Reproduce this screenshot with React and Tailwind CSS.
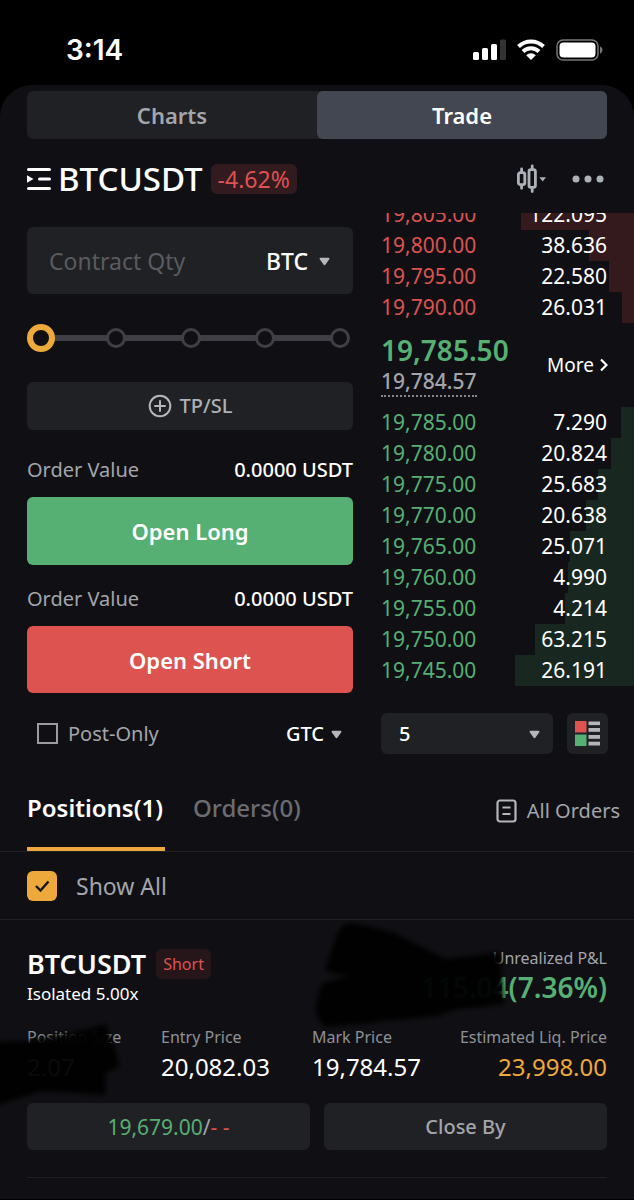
import { useState } from 'react';

const asks = [
  { price: '19,805.00', qty: '122.095', depth: 45 },
  { price: '19,800.00', qty: '38.636', depth: 18 },
  { price: '19,795.00', qty: '22.580', depth: 10 },
  { price: '19,790.00', qty: '26.031', depth: 5 },
];

const bids = [
  { price: '19,785.00', qty: '7.290', depth: 5 },
  { price: '19,780.00', qty: '20.824', depth: 9 },
  { price: '19,775.00', qty: '25.683', depth: 14 },
  { price: '19,770.00', qty: '20.638', depth: 19 },
  { price: '19,765.00', qty: '25.071', depth: 25 },
  { price: '19,760.00', qty: '4.990', depth: 26 },
  { price: '19,755.00', qty: '4.214', depth: 27 },
  { price: '19,750.00', qty: '63.215', depth: 39 },
  { price: '19,745.00', qty: '26.191', depth: 47 },
];

const steps = [0, 25, 50, 75, 100];

function Caret({ className }) {
  return (
    <svg className={className} width="11" height="9" viewBox="0 0 12 9" fill="#B4B6BC" aria-hidden="true">
      <path d="M1.6 0.5h8.8c.9 0 1.3.9.8 1.6L7.1 7.9c-.5.8-1.7.8-2.2 0L.8 2.1C.3 1.4.7.5 1.6.5z" />
    </svg>
  );
}

function StatusBar() {
  return (
    <div className="flex h-[85px] items-center justify-between pt-[15px] pr-[31px] pl-[66px]">
      <span className="font-['Inter',sans-serif] text-[28px] leading-8 font-semibold">3:14</span>
      <div className="flex items-center gap-[11px]">
        <svg width="33" height="22" viewBox="0 0 33 22" fill="white">
          <rect x="0" y="13" width="6" height="8" rx="1.5" />
          <rect x="9" y="9" width="6" height="12" rx="1.5" />
          <rect x="18" y="5" width="6" height="16" rx="1.5" />
          <rect x="27" y="0.5" width="6" height="20.5" rx="1.5" fill="#333" />
        </svg>
        <svg width="28" height="22" viewBox="0 0 28 22" fill="none" stroke="white" strokeWidth="4">
          <path d="M1.5 7.5a18 18 0 0 1 25 0" />
          <path d="M6 12.5a11.5 11.5 0 0 1 16 0" />
          <path d="M9.2 16.2a7 7 0 0 1 9.6 0L14 21z" fill="white" stroke="none" />
        </svg>
        <svg width="47" height="22" viewBox="0 0 47 22" fill="none">
          <rect x="1" y="1" width="41" height="20" rx="6" stroke="#777" strokeWidth="1.5" />
          <rect x="3.5" y="3.5" width="36" height="15" rx="4" fill="white" />
          <path d="M44 7.5c1.6.6 2.5 2 2.5 3.5s-.9 2.9-2.5 3.5z" fill="#777" />
        </svg>
      </div>
    </div>
  );
}

function PairHeader() {
  return (
    <header className="flex h-[74px] items-center justify-between pt-[6px] pr-[30px] pl-[27px]">
      <div className="flex items-center">
        <button aria-label="Pairs" className="mr-[7px]">
          <svg width="24" height="24" viewBox="0 0 24 24" fill="none" stroke="white" strokeWidth="3" strokeLinecap="round">
            <path d="M1.5 2.5h21M12.5 12h10M1.5 21.5h21" />
            <path d="M0 8.2v7.6L6.5 12z" fill="white" stroke="none" />
          </svg>
        </button>
        <h1 className="text-[33px] leading-9 font-medium">BTCUSDT</h1>
        <span className="ml-2 rounded-md bg-[#321a1f] px-[7px] text-[23px] leading-[30px] text-[#DD5350]">-4.62%</span>
      </div>
      <div className="flex items-center gap-[25px]">
        <button aria-label="Chart type">
          <svg width="30" height="30" viewBox="0 0 30 30" fill="none" stroke="#ADB1B8" strokeWidth="2.8" strokeLinecap="round">
            <rect x="1.4" y="8.6" width="6.4" height="12" rx="1.8" />
            <path d="M4.6 5v3M4.6 21.500V24.300" />
            <rect x="12" y="5.6" width="6.400" height="17.800" rx="1.8" />
            <path d="M15.2 2v3M15.200 24.500V27.500" />
            <path d="M22.400 13.200h6.600l-3.300 4.200z" fill="#ADB1B8" stroke="none" />
          </svg>
        </button>
        <button aria-label="More options">
          <svg width="32" height="8" viewBox="0 0 32 8" fill="#ADB1B8">
            <circle cx="4" cy="4" r="3.5" />
            <circle cx="16" cy="4" r="3.5" />
            <circle cx="28" cy="4" r="3.5" />
          </svg>
        </button>
      </div>
    </header>
  );
}

function PercentSlider() {
  const [value, setValue] = useState(0);
  return (
    <div className="relative mt-[30px] mr-[3px] ml-1 h-7">
      <div className="absolute top-[11px] right-2 left-2 h-[6px] bg-[#3F3F45]" />
      <div className="relative flex h-7 items-center justify-between">
        {steps.map((step) => (
          <span key={step} className="flex size-5 items-center justify-center">
            {step === value ? (
              <span className="-m-1 size-7 shrink-0 rounded-full border-6 border-[#EDA93B] bg-[#101014]" />
            ) : (
              <span className="size-5 rounded-full border-3 border-[#3F3F45] bg-[#101014]" />
            )}
          </span>
        ))}
      </div>
      <input
        type="range"
        aria-label="Percent of balance"
        min="0"
        max="100"
        step="25"
        value={value}
        onChange={(e) => setValue(Number(e.target.value))}
        className="absolute inset-0 w-full cursor-pointer opacity-0"
      />
    </div>
  );
}

function OrderValue() {
  return (
    <div className="flex justify-between text-[20px] leading-7">
      <span className="text-[#A3A5AB]">Order Value</span>
      <span className="font-medium">0.0000 USDT</span>
    </div>
  );
}

function OrderForm() {
  return (
    <form className="min-w-0 flex-1 pt-[14px]" onSubmit={(e) => e.preventDefault()}>
      <div className="flex h-[67px] items-center rounded-md bg-[#202124] pr-[23px] pl-[22px]">
        <input
          type="text"
          aria-label="Contract Qty"
          placeholder="Contract Qty"
          className="w-full min-w-0 flex-1 bg-transparent text-[23px] leading-8 outline-none placeholder:text-[#5A5B60]"
        />
        <div className="relative">
          <select aria-label="Unit" className="field-sizing-content appearance-none bg-transparent pr-[22px] text-[23px] leading-8 font-medium">
            <option>BTC</option>
            <option>USDT</option>
          </select>
          <Caret className="pointer-events-none absolute top-3 right-0" />
        </div>
      </div>

      <PercentSlider />

      <button type="button" className="mt-[30px] flex h-12 w-full items-center justify-center gap-2 rounded-md bg-[#202124] text-[20px] leading-7 font-medium text-[#ADB1B8]">
        <svg width="24" height="24" viewBox="0 0 24 24" fill="none" stroke="#B4B6BC" strokeWidth="2" strokeLinecap="round">
          <circle cx="12" cy="12" r="10.3" />
          <path d="M12 7v10M7 12h10" />
        </svg>
        TP/SL
      </button>

      <div className="mt-[26px] flex flex-col gap-[13px]">
        <OrderValue />
        <button className="h-[68px] rounded-md bg-[#56AF73] text-[22px] leading-8 font-semibold">Open Long</button>
      </div>
      <div className="mt-5 flex flex-col gap-[13px]">
        <OrderValue />
        <button className="h-[67px] rounded-md bg-[#DD5350] text-[22px] leading-8 font-semibold">Open Short</button>
      </div>

      <div className="mt-5 flex h-[41px] items-center justify-between pr-[11px] pl-[10px] text-[20px] leading-7">
        <label className="flex items-center gap-[10px] text-[#A3A5AB]">
          <input type="checkbox" className="size-[21px] appearance-none border-2 border-[#9a9ca1] checked:bg-[#EDA93B]" />
          Post-Only
        </label>
        <div className="relative">
          <select aria-label="Time in force" className="field-sizing-content appearance-none bg-transparent pr-[18px] font-medium">
            <option>GTC</option>
            <option>IOC</option>
            <option>FOK</option>
          </select>
          <Caret className="pointer-events-none absolute top-[10px] right-0" />
        </div>
      </div>
    </form>
  );
}

function BookTable({ rows, label, priceClass, barColor }) {
  return (
    <table aria-label={label} className="w-full border-collapse text-[21px] leading-[31px]">
      <tbody>
        {rows.map(({ price, qty, depth }) => (
          <tr
            key={price}
            style={{ backgroundImage: `linear-gradient(to left, ${barColor} ${depth}%, transparent ${depth}%)` }}
          >
            <td className={`p-0 ${priceClass}`}>{price}</td>
            <td className="p-0 pr-[27px] text-right">{qty}</td>
          </tr>
        ))}
      </tbody>
    </table>
  );
}

function OrderBook() {
  return (
    <div className="w-[253px] shrink-0">
      {/* the farthest ask is cut off by the top of the list */}
      <div className="flex h-[110px] flex-col justify-end overflow-hidden">
        <BookTable rows={asks} label="Asks" priceClass="text-[#DD5350]" barColor="#34191D" />
      </div>

      <div className="flex h-[84px] items-center justify-between pr-[26px]">
        <div>
          <div className="text-[28px] leading-[34px] font-semibold text-[#56AF73]">19,785.50</div>
          <div className="inline-block border-b-2 border-dotted border-[#85878d] text-[21px] leading-7 font-medium text-[#A3A5AB]">19,784.57</div>
        </div>
        <a href="#book" className="flex items-center gap-[6px] text-[19px] leading-7">
          More
          <svg width="8" height="14" viewBox="0 0 8 14" fill="none" stroke="white" strokeWidth="2.2">
            <path d="M1 1.5L6.5 7 1 12.5" />
          </svg>
        </a>
      </div>

      <BookTable rows={bids} label="Bids" priceClass="text-[#56AF73]" barColor="#182820" />

      <div className="mt-[27px] flex gap-[14px] pr-[26px]">
        <div className="relative flex-1">
          <select aria-label="Price grouping" className="h-[41px] w-full appearance-none rounded-md bg-[#202124] pl-[18px] text-[20px] leading-7 font-medium">
            <option>5</option>
            <option>10</option>
            <option>50</option>
          </select>
          <Caret className="pointer-events-none absolute top-[17px] right-[13px]" />
        </div>
        <button aria-label="Book layout" className="flex size-[41px] items-center justify-center rounded-md bg-[#202124]">
          <svg width="25" height="25" viewBox="0 0 25 25" fill="#B4B6BC">
            <rect width="11.5" height="11.5" fill="#DD5350" />
            <rect y="13.5" width="11.5" height="11.5" fill="#56AF73" />
            <rect x="13.5" y="0.5" width="11.5" height="3.6" />
            <rect x="13.5" y="7" width="11.5" height="3.8" />
            <rect x="13.5" y="14" width="11.5" height="3.8" />
            <rect x="13.5" y="20.7" width="11.5" height="3.8" />
          </svg>
        </button>
      </div>
    </div>
  );
}

function PositionTabs() {
  return (
    <>
      <nav className="mt-[11px] flex h-[87px] items-stretch justify-between border-b border-[#202124] pr-[14px] pl-[27px]">
        <div className="flex gap-7 text-[24px] leading-8">
          <button className="border-b-4 border-[#EDA93B] pt-1 pr-[2px] font-semibold">Positions(1)</button>
          <button className="border-b-4 border-transparent pt-1 font-medium text-[#6B6C72]">Orders(0)</button>
        </div>
        <a href="#orders" className="flex items-center gap-[10px] pt-[6px] text-[20px] leading-7 text-[#A3A5AB]">
          <svg width="21" height="24" viewBox="0 0 21 24" fill="none" stroke="#B4B6BC" strokeWidth="2.2">
            <rect x="1.5" y="1.5" width="18" height="21" rx="2.5" />
            <path d="M6.5 8.5h8M6.5 15h8" />
          </svg>
          All Orders
        </a>
      </nav>
      <label className="flex h-[68px] items-center gap-[19px] border-b border-[#202124] pl-[27px] text-[23px] leading-8 text-[#A3A5AB]">
        <span className="relative size-[30px]">
          <input type="checkbox" defaultChecked className="peer block size-[30px] appearance-none rounded-md bg-[#303136] checked:bg-[#EDA93B]" />
          <svg className="pointer-events-none absolute top-[9px] left-2 hidden peer-checked:block" width="15" height="13" viewBox="0 0 15 13" fill="none" stroke="#17171b" strokeWidth="2.4">
            <path d="M1 6l4.5 4.5L13.5 1.5" />
          </svg>
        </span>
        Show All
      </label>
    </>
  );
}

function Scribble() {
  return (
    <svg className="pointer-events-none absolute inset-x-0 top-0 h-[190px] w-[634px]" viewBox="0 0 634 190" aria-hidden="true">
      <defs>
        <filter id="soft" x="-10%" y="-10%" width="120%" height="120%">
          <feGaussianBlur stdDeviation="2.5" />
        </filter>
      </defs>
      <g fill="black" fillOpacity="0.96" filter="url(#soft)">
        <path d="M326 46L338 12Q342 2 354 3L392 12L446 39L500 32L504 84L454 90L438 96L326 107Q315 100 316 84L322 63L350 56L326 52z" />
        <path d="M-6 122L28 121L66 114L106 104L120 146L106 153L106 175L42 171L-6 186z" />
      </g>
    </svg>
  );
}

function Stat({ label, value, valueClass = '' }) {
  return (
    <div>
      <dt className="text-[16px] leading-6 text-[#8E9096]">{label}</dt>
      <dd className={`mt-[2px] text-[24px] leading-8 ${valueClass}`}>{value}</dd>
    </div>
  );
}

function PositionCard() {
  return (
    <section className="relative overflow-hidden px-[27px]">
      <div className="flex justify-between pt-6">
        <div>
          <div className="flex h-10 items-center gap-[10px]">
            <h2 className="text-[27px] leading-8 font-semibold">BTCUSDT</h2>
            <span className="rounded-md bg-[#271619] px-[7px] text-[16px] leading-[30px] text-[#DD5350]">Short</span>
          </div>
          <div className="text-[17px] leading-5">Isolated 5.00x</div>
        </div>
        <div className="pt-[2px] text-right">
          <div className="text-[16px] leading-6 text-[#A3A5AB]">Unrealized P&amp;L</div>
          <div className="text-[28px] leading-[34px] font-semibold text-[#56AF73]">115.04(7.36%)</div>
        </div>
      </div>

      <dl className="mt-[21px] grid grid-cols-[134px_151px_1fr_auto]">
        <Stat label="Position Size" value="2.07" />
        <Stat label="Entry Price" value="20,082.03" />
        <Stat label="Mark Price" value="19,784.57" />
        <Stat label="Estimated Liq. Price" value="23,998.00" valueClass="text-right text-[#EDA93B]" />
      </dl>

      <Scribble />

      <div className="mt-5 grid grid-cols-2 gap-[14px] border-b border-[#202124] pb-[27px] leading-7 text-[#A3A5AB]">
        <button className="h-[47px] rounded-md bg-[#202124] text-[21px]">
          <span className="text-[#56AF73]">19,679.00</span>/<span className="text-[#DD5350]">- -</span>
        </button>
        <button className="h-[47px] rounded-md bg-[#202124] text-[20px] font-medium">Close By</button>
      </div>
    </section>
  );
}

export default function App() {
  return (
    <div className="min-h-screen bg-black font-['Noto_Sans',sans-serif] text-white">
      <StatusBar />
      <main className="rounded-t-[32px] bg-[#101014] pt-[6px] pb-[21px]">
        <div className="mx-[27px] grid h-12 grid-cols-2 rounded-md bg-[#202124] text-[22px] leading-8 font-semibold">
          <button className="rounded-md text-[#A3A5AB]">Charts</button>
          <button className="rounded-md bg-[#424752]">Trade</button>
        </div>
        <PairHeader />
        <div className="flex gap-7 pl-[27px]">
          <OrderForm />
          <OrderBook />
        </div>
        <PositionTabs />
        <PositionCard />
      </main>
    </div>
  );
}
